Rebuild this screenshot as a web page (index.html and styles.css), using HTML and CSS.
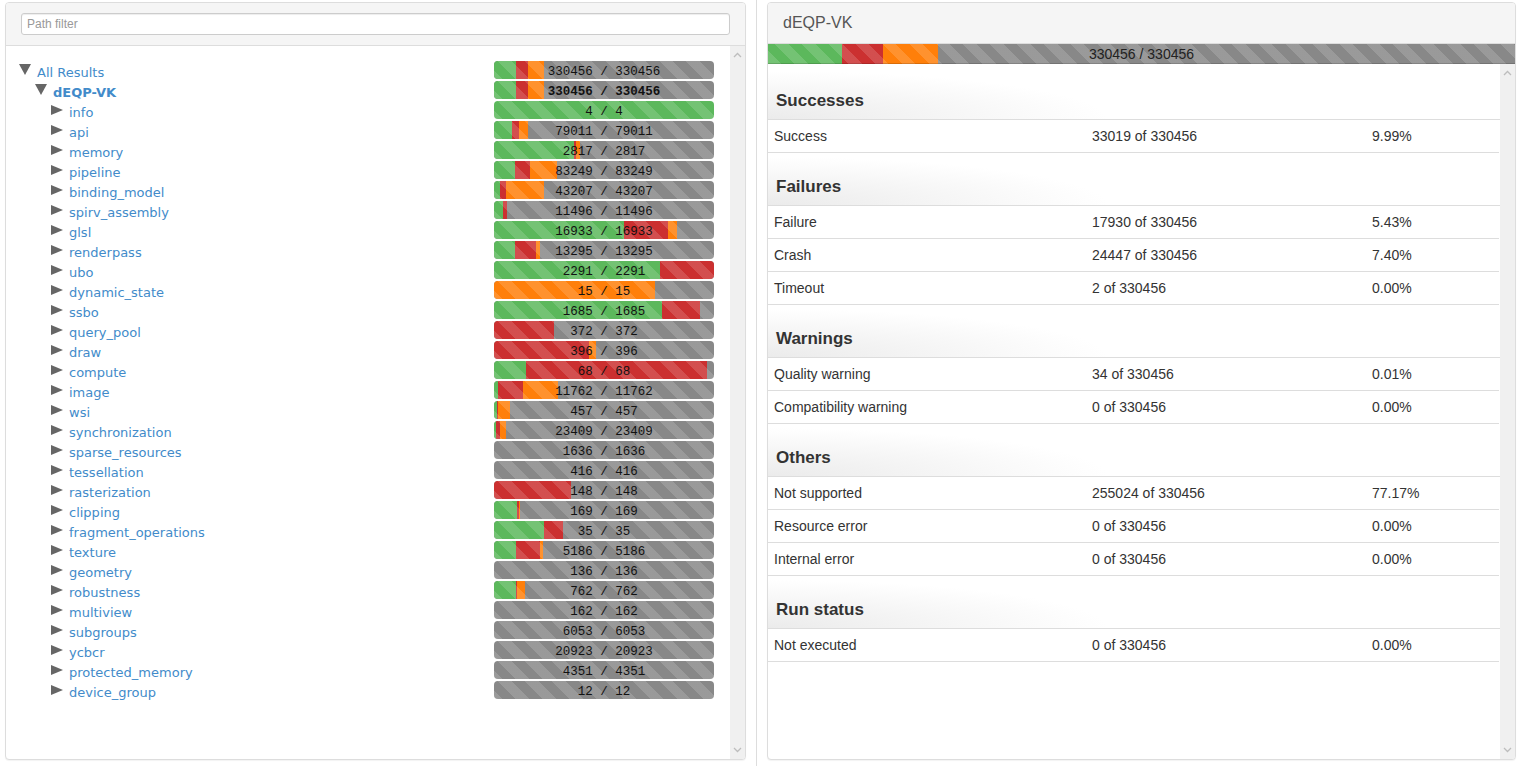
FILE: index.html
```html
<!DOCTYPE html>
<html>
<head>
<meta charset="utf-8">
<title>dEQP-VK results</title>
<link rel="stylesheet" href="styles.css">
</head>
<body>
<div class="app">
  <section class="panel tree-panel">
    <div class="panel-head"><input class="filter" type="text" placeholder="Path filter"></div>
    <div class="scroll-wrap">
    <div class="tree-body">
      <ul class="tree">
        <li class="row"><span class="node d0"><i class="tw open"></i><a class="lbl">All Results</a></span><div class="bar"><div class="segs"><i class="seg pass" style="width:10%"></i><i class="seg fail" style="width:5.5%"></i><i class="seg crash" style="width:7.3%"></i></div><div class="stripes"></div><div class="txt">330456 / 330456</div></div></li>
        <li class="row"><span class="node d1"><i class="tw open"></i><a class="lbl strong">dEQP-VK</a></span><div class="bar"><div class="segs"><i class="seg pass" style="width:10%"></i><i class="seg fail" style="width:5.5%"></i><i class="seg crash" style="width:7.3%"></i></div><div class="stripes"></div><div class="txt strong">330456 / 330456</div></div></li>
        <li class="row"><span class="node d2"><i class="tw"></i><a class="lbl">info</a></span><div class="bar"><div class="segs"><i class="seg pass" style="width:100%"></i></div><div class="stripes"></div><div class="txt">4 / 4</div></div></li>
        <li class="row"><span class="node d2"><i class="tw"></i><a class="lbl">api</a></span><div class="bar"><div class="segs"><i class="seg pass" style="width:8.2%"></i><i class="seg fail" style="width:3.2%"></i><i class="seg crash" style="width:4.1%"></i></div><div class="stripes"></div><div class="txt">79011 / 79011</div></div></li>
        <li class="row"><span class="node d2"><i class="tw"></i><a class="lbl">memory</a></span><div class="bar"><div class="segs"><i class="seg pass" style="width:36.4%"></i><i class="seg fail" style="width:0.9%"></i><i class="seg crash" style="width:1.8%"></i></div><div class="stripes"></div><div class="txt">2817 / 2817</div></div></li>
        <li class="row"><span class="node d2"><i class="tw"></i><a class="lbl">pipeline</a></span><div class="bar"><div class="segs"><i class="seg pass" style="width:9.5%"></i><i class="seg fail" style="width:6.8%"></i><i class="seg crash" style="width:12.3%"></i></div><div class="stripes"></div><div class="txt">83249 / 83249</div></div></li>
        <li class="row"><span class="node d2"><i class="tw"></i><a class="lbl">binding_model</a></span><div class="bar"><div class="segs"><i class="seg pass" style="width:2.7%"></i><i class="seg fail" style="width:2.7%"></i><i class="seg crash" style="width:17.3%"></i></div><div class="stripes"></div><div class="txt">43207 / 43207</div></div></li>
        <li class="row"><span class="node d2"><i class="tw"></i><a class="lbl">spirv_assembly</a></span><div class="bar"><div class="segs"><i class="seg pass" style="width:4.1%"></i><i class="seg fail" style="width:1.8%"></i></div><div class="stripes"></div><div class="txt">11496 / 11496</div></div></li>
        <li class="row"><span class="node d2"><i class="tw"></i><a class="lbl">glsl</a></span><div class="bar"><div class="segs"><i class="seg pass" style="width:59.1%"></i><i class="seg fail" style="width:20%"></i><i class="seg crash" style="width:4.1%"></i></div><div class="stripes"></div><div class="txt">16933 / 16933</div></div></li>
        <li class="row"><span class="node d2"><i class="tw"></i><a class="lbl">renderpass</a></span><div class="bar"><div class="segs"><i class="seg pass" style="width:9.5%"></i><i class="seg fail" style="width:9.5%"></i><i class="seg crash" style="width:1.8%"></i></div><div class="stripes"></div><div class="txt">13295 / 13295</div></div></li>
        <li class="row"><span class="node d2"><i class="tw"></i><a class="lbl">ubo</a></span><div class="bar"><div class="segs"><i class="seg pass" style="width:75.5%"></i><i class="seg fail" style="width:24.5%"></i></div><div class="stripes"></div><div class="txt">2291 / 2291</div></div></li>
        <li class="row"><span class="node d2"><i class="tw"></i><a class="lbl">dynamic_state</a></span><div class="bar"><div class="segs"><i class="seg crash" style="width:73.2%"></i></div><div class="stripes"></div><div class="txt">15 / 15</div></div></li>
        <li class="row"><span class="node d2"><i class="tw"></i><a class="lbl">ssbo</a></span><div class="bar"><div class="segs"><i class="seg pass" style="width:76.4%"></i><i class="seg fail" style="width:17.3%"></i></div><div class="stripes"></div><div class="txt">1685 / 1685</div></div></li>
        <li class="row"><span class="node d2"><i class="tw"></i><a class="lbl">query_pool</a></span><div class="bar"><div class="segs"><i class="seg fail" style="width:27.3%"></i></div><div class="stripes"></div><div class="txt">372 / 372</div></div></li>
        <li class="row"><span class="node d2"><i class="tw"></i><a class="lbl">draw</a></span><div class="bar"><div class="segs"><i class="seg fail" style="width:43.2%"></i><i class="seg crash" style="width:3.2%"></i></div><div class="stripes"></div><div class="txt">396 / 396</div></div></li>
        <li class="row"><span class="node d2"><i class="tw"></i><a class="lbl">compute</a></span><div class="bar"><div class="segs"><i class="seg pass" style="width:14.5%"></i><i class="seg fail" style="width:82.3%"></i></div><div class="stripes"></div><div class="txt">68 / 68</div></div></li>
        <li class="row"><span class="node d2"><i class="tw"></i><a class="lbl">image</a></span><div class="bar"><div class="segs"><i class="seg pass" style="width:1.8%"></i><i class="seg fail" style="width:11.4%"></i><i class="seg crash" style="width:15.9%"></i></div><div class="stripes"></div><div class="txt">11762 / 11762</div></div></li>
        <li class="row"><span class="node d2"><i class="tw"></i><a class="lbl">wsi</a></span><div class="bar"><div class="segs"><i class="seg pass" style="width:1.4%"></i><i class="seg fail" style="width:0.5%"></i><i class="seg crash" style="width:5.5%"></i></div><div class="stripes"></div><div class="txt">457 / 457</div></div></li>
        <li class="row"><span class="node d2"><i class="tw"></i><a class="lbl">synchronization</a></span><div class="bar"><div class="segs"><i class="seg pass" style="width:0.9%"></i><i class="seg fail" style="width:1.8%"></i><i class="seg crash" style="width:2.7%"></i></div><div class="stripes"></div><div class="txt">23409 / 23409</div></div></li>
        <li class="row"><span class="node d2"><i class="tw"></i><a class="lbl">sparse_resources</a></span><div class="bar"><div class="segs"></div><div class="stripes"></div><div class="txt">1636 / 1636</div></div></li>
        <li class="row"><span class="node d2"><i class="tw"></i><a class="lbl">tessellation</a></span><div class="bar"><div class="segs"></div><div class="stripes"></div><div class="txt">416 / 416</div></div></li>
        <li class="row"><span class="node d2"><i class="tw"></i><a class="lbl">rasterization</a></span><div class="bar"><div class="segs"><i class="seg fail" style="width:35%"></i></div><div class="stripes"></div><div class="txt">148 / 148</div></div></li>
        <li class="row"><span class="node d2"><i class="tw"></i><a class="lbl">clipping</a></span><div class="bar"><div class="segs"><i class="seg pass" style="width:10.5%"></i><i class="seg fail" style="width:0.9%"></i><i class="seg crash" style="width:0.5%"></i></div><div class="stripes"></div><div class="txt">169 / 169</div></div></li>
        <li class="row"><span class="node d2"><i class="tw"></i><a class="lbl">fragment_operations</a></span><div class="bar"><div class="segs"><i class="seg pass" style="width:22.7%"></i><i class="seg fail" style="width:8.6%"></i></div><div class="stripes"></div><div class="txt">35 / 35</div></div></li>
        <li class="row"><span class="node d2"><i class="tw"></i><a class="lbl">texture</a></span><div class="bar"><div class="segs"><i class="seg pass" style="width:10%"></i><i class="seg fail" style="width:10.9%"></i><i class="seg crash" style="width:1.4%"></i></div><div class="stripes"></div><div class="txt">5186 / 5186</div></div></li>
        <li class="row"><span class="node d2"><i class="tw"></i><a class="lbl">geometry</a></span><div class="bar"><div class="segs"></div><div class="stripes"></div><div class="txt">136 / 136</div></div></li>
        <li class="row"><span class="node d2"><i class="tw"></i><a class="lbl">robustness</a></span><div class="bar"><div class="segs"><i class="seg pass" style="width:10%"></i><i class="seg fail" style="width:0.5%"></i><i class="seg crash" style="width:3.6%"></i></div><div class="stripes"></div><div class="txt">762 / 762</div></div></li>
        <li class="row"><span class="node d2"><i class="tw"></i><a class="lbl">multiview</a></span><div class="bar"><div class="segs"></div><div class="stripes"></div><div class="txt">162 / 162</div></div></li>
        <li class="row"><span class="node d2"><i class="tw"></i><a class="lbl">subgroups</a></span><div class="bar"><div class="segs"></div><div class="stripes"></div><div class="txt">6053 / 6053</div></div></li>
        <li class="row"><span class="node d2"><i class="tw"></i><a class="lbl">ycbcr</a></span><div class="bar"><div class="segs"></div><div class="stripes"></div><div class="txt">20923 / 20923</div></div></li>
        <li class="row"><span class="node d2"><i class="tw"></i><a class="lbl">protected_memory</a></span><div class="bar"><div class="segs"></div><div class="stripes"></div><div class="txt">4351 / 4351</div></div></li>
        <li class="row"><span class="node d2"><i class="tw"></i><a class="lbl">device_group</a></span><div class="bar"><div class="segs"></div><div class="stripes"></div><div class="txt">12 / 12</div></div></li>
      </ul>
    </div>
    <div class="vscroll">
      <svg class="chev" width="9" height="6" viewBox="0 0 9 6"><path d="M1 5 L4.5 1.5 L8 5" fill="none" stroke="#bdbdbd" stroke-width="1.3"/></svg>
      <svg class="chev" width="9" height="6" viewBox="0 0 9 6"><path d="M1 1 L4.5 4.5 L8 1" fill="none" stroke="#bdbdbd" stroke-width="1.3"/></svg>
    </div>
    </div>
  </section>
  <div class="splitter"></div>
  <section class="panel detail-panel">
    <div class="detail-head">dEQP-VK</div>
    <div class="bar bar-wide"><div class="segs"><i class="seg pass" style="width:9.9%"></i><i class="seg fail" style="width:5.5%"></i><i class="seg crash" style="width:7.4%"></i></div><div class="stripes"></div><div class="txt">330456 / 330456</div></div>
    <div class="scroll-wrap">
    <div class="detail-body">
      <div class="group-title">Successes</div>
      <div class="stat"><span>Success</span><span>33019 of 330456</span><span>9.99%</span></div>
      <div class="group-title">Failures</div>
      <div class="stat"><span>Failure</span><span>17930 of 330456</span><span>5.43%</span></div>
      <div class="stat"><span>Crash</span><span>24447 of 330456</span><span>7.40%</span></div>
      <div class="stat"><span>Timeout</span><span>2 of 330456</span><span>0.00%</span></div>
      <div class="group-title">Warnings</div>
      <div class="stat"><span>Quality warning</span><span>34 of 330456</span><span>0.01%</span></div>
      <div class="stat"><span>Compatibility warning</span><span>0 of 330456</span><span>0.00%</span></div>
      <div class="group-title">Others</div>
      <div class="stat"><span>Not supported</span><span>255024 of 330456</span><span>77.17%</span></div>
      <div class="stat"><span>Resource error</span><span>0 of 330456</span><span>0.00%</span></div>
      <div class="stat"><span>Internal error</span><span>0 of 330456</span><span>0.00%</span></div>
      <div class="group-title">Run status</div>
      <div class="stat"><span>Not executed</span><span>0 of 330456</span><span>0.00%</span></div>
    </div>
    <div class="vscroll">
      <svg class="chev" width="9" height="6" viewBox="0 0 9 6"><path d="M1 5 L4.5 1.5 L8 5" fill="none" stroke="#bdbdbd" stroke-width="1.3"/></svg>
      <svg class="chev" width="9" height="6" viewBox="0 0 9 6"><path d="M1 1 L4.5 4.5 L8 1" fill="none" stroke="#bdbdbd" stroke-width="1.3"/></svg>
    </div>
    </div>
  </section>
</div>
</body>
</html>
```
FILE: styles.css
```css
html, body {
  margin: 0;
  padding: 0;
  height: 100%;
  background: #fff;
}
body {
  font-family: "Liberation Sans", Arial, sans-serif;
  font-size: 14px;
  color: #333;
}
.app {
  display: flex;
  height: 766px;
  padding: 0 5px;
  box-sizing: border-box;
}
.panel {
  display: flex;
  flex-direction: column;
  margin: 2px 0 6px;
  border: 1px solid #ddd;
  border-radius: 4px;
  box-shadow: 0 1px 1px rgba(0, 0, 0, 0.05);
  background: #fff;
  overflow: hidden;
  box-sizing: border-box;
  flex: none;
}
.tree-panel { width: 741px; }
.detail-panel { width: 749px; }
.splitter {
  flex: none;
  width: 21px;
  background: linear-gradient(#ddd, #ddd) center / 1px 100% no-repeat;
}

/* fake scrollbars */
.scroll-wrap {
  flex: 1;
  display: flex;
  min-height: 0;
}
.vscroll {
  flex: none;
  width: 15px;
  background: #f0f0f0;
  display: flex;
  flex-direction: column;
  justify-content: space-between;
  align-items: center;
  padding: 6px 0 6px;
  box-sizing: border-box;
}
.chev { display: block; }

/* left panel */
.panel-head {
  background: #f5f5f5;
  border-bottom: 1px solid #ddd;
  padding: 10px 15px;
}
.filter {
  display: block;
  width: 100%;
  height: 22px;
  box-sizing: border-box;
  margin: 0;
  padding: 0 5px;
  border: 1px solid #ccc;
  border-radius: 3px;
  box-shadow: inset 0 1px 1px rgba(0, 0, 0, 0.075);
  font: 12px "Liberation Sans", Arial, sans-serif;
  color: #555;
  background: #fff;
}
.filter::placeholder { color: #999; }
.tree-body {
  flex: 1;
  overflow: hidden;
  padding-top: 15px;
}
.tree {
  list-style: none;
  margin: 0;
  padding: 0;
}
.row {
  display: flex;
  height: 20px;
}
.node {
  flex: 1;
  display: flex;
  align-items: flex-start;
  height: 20px;
  font: 13px/24px "DejaVu Sans", Verdana, sans-serif;
}
.d0 { padding-left: 13px; }
.d1 { padding-left: 29px; }
.d2 { padding-left: 45px; }
.lbl {
  color: #428bca;
  text-decoration: none;
  cursor: pointer;
}
.lbl.strong { font-weight: bold; }
.tw {
  flex: none;
  width: 0;
  height: 0;
  margin: 4px 6px 0 0;
  border-left: 12px solid #666;
  border-top: 5px solid transparent;
  border-bottom: 5px solid transparent;
}
.tw.open {
  margin-top: 3px;
  border-left: 6px solid transparent;
  border-right: 6px solid transparent;
  border-top: 11px solid #666;
  border-bottom: 0;
}

/* progress bars */
.bar {
  flex: none;
  display: grid;
  width: 220px;
  height: 18px;
  margin-right: 16px;
  border-radius: 4px;
  overflow: hidden;
  background: #888;
}
.bar > * { grid-area: 1 / 1; }
.segs { display: flex; }
.seg { display: block; height: 100%; }
.seg.pass { background: #5cb85c; }
.seg.fail { background: #cb3030; }
.seg.crash { background: #ff7f0a; }
.stripes {
  background-image: repeating-linear-gradient(45deg, rgba(255, 255, 255, 0.15) 0 9.5px, transparent 9.5px 19px);
  box-shadow: inset 0 -1px 0 rgba(0, 0, 0, 0.15);
}
.txt {
  text-align: center;
  font: 12.5px/23px "Liberation Mono", "Courier New", monospace;
  color: #111;
  white-space: nowrap;
}
.txt.strong { font-weight: bold; }

/* right panel */
.detail-head {
  height: 40px;
  display: flex;
  align-items: center;
  padding: 0 15px;
  background: #f5f5f5;
  font-size: 16px;
  color: #555;
}
.bar-wide {
  width: auto;
  height: 21px;
  margin: 0;
  border-radius: 0;
  border-top: 1px solid #ddd;
  box-sizing: border-box;
  flex: none;
}
.bar-wide .txt {
  font: 14px/20px "Liberation Sans", Arial, sans-serif;
  color: #222;
}
.detail-body {
  flex: 1;
  overflow: hidden;
  padding-top: 3px;
}
.group-title {
  height: 53px;
  box-sizing: border-box;
  display: flex;
  align-items: flex-end;
  padding: 0 0 8px 8px;
  border-bottom: 1px solid #ddd;
  font-size: 17px;
  font-weight: bold;
  color: #333;
  background: radial-gradient(ellipse 340px 48px at 0% 100%, #ebebeb, rgba(255, 255, 255, 0));
}
.stat {
  display: grid;
  grid-template-columns: 318px 280px 1fr;
  align-items: center;
  height: 33px;
  box-sizing: border-box;
  border-bottom: 1px solid #ddd;
  margin-right: 1px;
  font-size: 14px;
  color: #333;
}
.stat span { padding-left: 6px; }
```
